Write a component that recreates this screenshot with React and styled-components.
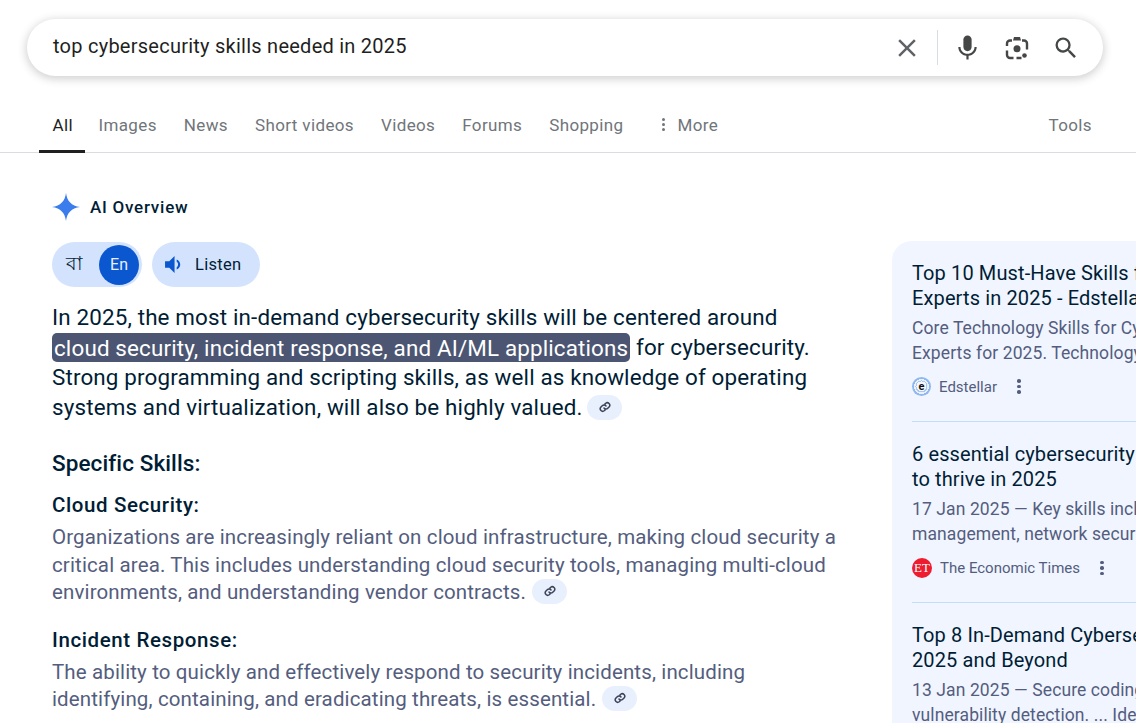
import styled, { createGlobalStyle } from "styled-components"

const GlobalStyle = createGlobalStyle`
  html, body {
    margin: 0;
    padding: 0;
    height: 100%;
    overflow: hidden;
    background: #fff;
    font-family: "Roboto", "Liberation Sans", sans-serif;
  }
  * { box-sizing: border-box; }
`

const tabs = ["All", "Images", "News", "Short videos", "Videos", "Forums", "Shopping"]

function LinkChip() {
  return (
    <Chip>
      <svg width="12" height="12" viewBox="0 0 24 24" fill="none" stroke="#3c4358" strokeWidth="3" strokeLinecap="round">
        <path d="M10 14a5 5 0 0 0 7.5.5l3-3a5 5 0 0 0-7-7l-1.7 1.7" />
        <path d="M14 10a5 5 0 0 0-7.5-.5l-3 3a5 5 0 0 0 7 7l1.7-1.7" />
      </svg>
    </Chip>
  )
}

function Dots() {
  return (
    <DotsWrap>
      <i /><i /><i />
    </DotsWrap>
  )
}

function App() {
  return (
    <Page>
      <GlobalStyle />
      <SearchBar>
        <SearchText>top cybersecurity skills needed in 2025</SearchText>
        <svg width="30" height="30" viewBox="0 0 24 24" fill="#5f6368">
          <path d="M19 6.41 17.59 5 12 10.59 6.41 5 5 6.41 10.59 12 5 17.59 6.41 19 12 13.41 17.59 19 19 17.59 13.41 12z" />
        </svg>
        <Divider />
        <IconGroup>
          <svg width="29" height="29" viewBox="0 0 24 24" fill="#444746">
            <path d="M12 15c1.9 0 3.4-1.5 3.4-3.4V5.4C15.4 3.5 13.9 2 12 2S8.600 3.500 8.600 5.400v6.200C8.600 13.500 10.100 15 12 15z" />
            <path d="M17.800 11.500c0 3.200-2.600 5.600-5.800 5.600s-5.800-2.400-5.800-5.600H4.400c0 3.800 3 6.900 6.700 7.400V22h1.800v-3.100c3.700-.5 6.700-3.600 6.700-7.400h-1.800z" />
          </svg>
          <svg width="24" height="24" viewBox="0 0 24 24" fill="none">
            <path d="M8 4.500l1-3.500h6l1 3.500z" fill="#444746" />
            <path d="M7 4.500H5a3 3 0 0 0-3 3V10M17 4.500h2a3 3 0 0 1 3 3v6M2 14.500V19a3 3 0 0 0 3 3h3.500M11.500 22h5" stroke="#444746" strokeWidth="2.400" />
            <circle cx="12" cy="12.800" r="3.500" fill="#444746" />
            <circle cx="19.500" cy="19.500" r="2.300" fill="#444746" />
          </svg>
          <svg width="28" height="28" viewBox="0 0 24 24" fill="#444746">
            <path d="M15.500 14h-.79l-.28-.27A6.470 6.470 0 0 0 16 9.500 6.500 6.500 0 1 0 9.500 16c1.610 0 3.090-.59 4.230-1.570l.27.28v.79l5 4.990L20.490 19l-4.990-5zm-6 0C7.010 14 5 11.990 5 9.500S7.010 5 9.500 5 14 7.010 14 9.500 11.990 14 9.500 14z" />
          </svg>
        </IconGroup>
      </SearchBar>

      <TabBar>
        {tabs.map((t, i) => (
          <Tab key={t} $active={i === 0}>{t}</Tab>
        ))}
        <Tab>
          <MoreDots><i /><i /><i /></MoreDots>
          More
        </Tab>
        <ToolsTab>Tools</ToolsTab>
      </TabBar>

      <Content>
        <MainColumn>
          <OverviewHead>
            <svg width="30" height="30" viewBox="0 0 30 30">
              <path d="M15 1c1 8 5.500 12.800 14 14-8.500 1.200-13 6-14 14-1-8-5.500-12.800-14-14C9.500 13.800 14 9 15 1z" fill="#3b7ded" />
            </svg>
            <OverviewTitle>AI Overview</OverviewTitle>
          </OverviewHead>

          <PillRow>
            <LangToggle>
              <LangOption>বা</LangOption>
              <LangActive>En</LangActive>
            </LangToggle>
            <ListenButton>
              <svg width="19" height="19" viewBox="2 3 18 18" fill="#0b57d0">
                <path d="M3 9v6h4l5 5V4L7 9H3z" />
                <path d="M14 7.200c2 .8 3.400 2.600 3.400 4.800s-1.400 4-3.400 4.800v-2.300c.9-.5 1.300-1.400 1.300-2.500s-.4-2-1.300-2.500z" />
              </svg>
              Listen
            </ListenButton>
          </PillRow>

          <Lead>
            In 2025, the most in-demand cybersecurity skills will be centered around<br />
            <Highlight>cloud security, incident response, and AI/ML applications</Highlight> for cybersecurity.<br />
            Strong programming and scripting skills, as well as knowledge of operating<br />
            systems and virtualization, will also be highly valued. <LinkChip />
          </Lead>

          <SectionTitle>Specific Skills:</SectionTitle>

          <SkillTitle>Cloud Security:</SkillTitle>
          <SkillText>
            Organizations are increasingly reliant on cloud infrastructure, making cloud security a<br />
            critical area. This includes understanding cloud security tools, managing multi-cloud<br />
            environments, and understanding vendor contracts. <LinkChip />
          </SkillText>

          <SkillTitle>Incident Response:</SkillTitle>
          <SkillText>
            The ability to quickly and effectively respond to security incidents, including<br />
            identifying, containing, and eradicating threats, is essential. <LinkChip />
          </SkillText>
        </MainColumn>

        <SidePanel>
          <Source>
            <SourceTitle>Top 10 Must-Have Skills for Cybersecurity<br />Experts in 2025 - Edstellar</SourceTitle>
            <SourceText>Core Technology Skills for Cybersecurity<br />Experts for 2025. Technology skills</SourceText>
            <SourceMeta>
              <EdIcon>e</EdIcon>
              <SourceName>Edstellar</SourceName>
              <Dots />
            </SourceMeta>
          </Source>
          <Source>
            <SourceTitle>6 essential cybersecurity skills you need<br />to thrive in 2025</SourceTitle>
            <SourceText>17 Jan 2025 — Key skills include risk<br />management, network security and</SourceText>
            <SourceMeta>
              <EtIcon>ET</EtIcon>
              <SourceName>The Economic Times</SourceName>
              <Dots />
            </SourceMeta>
          </Source>
          <Source>
            <SourceTitle>Top 8 In-Demand Cybersecurity Skills for<br />2025 and Beyond</SourceTitle>
            <SourceText>13 Jan 2025 — Secure coding and<br />vulnerability detection. ... Identity</SourceText>
          </Source>
        </SidePanel>
      </Content>
    </Page>
  )
}

const Page = styled.div`
  width: 1136px;
  height: 723px;
  overflow: hidden;
  padding-top: 19px;
  color: #001d35;
`

const SearchBar = styled.div`
  display: flex;
  align-items: center;
  width: 1076px;
  height: 57px;
  margin-left: 27px;
  padding: 0 23px 0 26px;
  background: #fff;
  border-radius: 29px;
  box-shadow: 0 2px 8px 1px rgba(64, 60, 67, 0.24);
`

const SearchText = styled.div`
  flex: 1;
  font-size: 20px;
  letter-spacing: 0.25px;
  color: #1f1f1f;
  padding-bottom: 4px;
`

const Divider = styled.div`
  width: 1px;
  height: 35px;
  margin: 0 15px 0 15px;
  background: #dadce0;
`

const IconGroup = styled.div`
  display: flex;
  align-items: center;
  gap: 23px;
`

const TabBar = styled.nav`
  display: flex;
  height: 57px;
  margin-top: 20px;
  padding: 0 44px 0 39px;
  border-bottom: 1px solid #dadce0;
`

const Tab = styled.div`
  display: flex;
  align-items: center;
  height: 57px;
  padding: 3px ${(p) => (p.$active ? "12px" : "13.5px")} 0 13.5px;
  font-size: 17px;
  letter-spacing: 0.37px;
  color: ${(p) => (p.$active ? "#1f1f1f" : "#70757a")};
  border-bottom: 3px solid ${(p) => (p.$active ? "#1f1f1f" : "transparent")};
`

const ToolsTab = styled(Tab)`
  margin-left: auto;
  padding: 3px 0 0;
`

const MoreDots = styled.span`
  display: inline-flex;
  flex-direction: column;
  gap: 2px;
  margin: 0 12px 0 12px;
  i {
    display: block;
    width: 3px;
    height: 3px;
    border-radius: 50%;
    background: #70757a;
  }
`

const Content = styled.div`
  display: flex;
  justify-content: space-between;
  padding-left: 52px;
`

const MainColumn = styled.div`
  width: 800px;
`

const OverviewHead = styled.div`
  display: flex;
  align-items: center;
  gap: 9px;
  margin: 39px 0 0 -1px;
  height: 30px;
`

const OverviewTitle = styled.div`
  font-size: 17px;
  font-weight: 500;
  letter-spacing: 0.75px;
  color: #001d35;
`

const PillRow = styled.div`
  display: flex;
  gap: 10px;
  margin-top: 20px;
`

const LangToggle = styled.div`
  display: flex;
  align-items: center;
  justify-content: space-between;
  width: 90px;
  height: 45px;
  padding: 0 3px 0 14px;
  border-radius: 23px;
  background: #d3e3fd;
`

const LangOption = styled.span`
  font-family: "Noto Sans", "DejaVu Sans", sans-serif;
  font-size: 19px;
  font-weight: 500;
  color: #001d35;
`

const LangActive = styled.span`
  display: flex;
  align-items: center;
  justify-content: center;
  width: 40px;
  height: 40px;
  border-radius: 50%;
  background: #0b57d0;
  color: #e8f0fe;
  font-size: 16px;
`

const ListenButton = styled.div`
  display: flex;
  align-items: center;
  gap: 12px;
  width: 108px;
  height: 45px;
  padding-left: 12px;
  border-radius: 23px;
  background: #d3e3fd;
  color: #001d35;
  font-size: 16.5px;
  letter-spacing: 0.3px;
`

const Lead = styled.div`
  margin-top: 15px;
  font-size: 22.4px;
  line-height: 30px;
  color: #001d35;
  letter-spacing: 0.15px;
  white-space: nowrap;
`

const Highlight = styled.span`
  background: #4c5672;
  color: #fff;
  border-radius: 5px;
  padding: 1.5px 2px;
`

const Chip = styled.span`
  display: inline-flex;
  align-items: center;
  justify-content: center;
  position: relative;
  top: -2px;
  width: 35px;
  height: 25px;
  margin-left: -1px;
  border-radius: 13px;
  background: #e8f0fe;
`

const SectionTitle = styled.div`
  margin-top: 27px;
  font-size: 22.5px;
  line-height: 28px;
  font-weight: 500;
  letter-spacing: 0.1px;
  color: #001d35;
`

const SkillTitle = styled.div`
  margin-top: 15px;
  font-size: 20.5px;
  line-height: 26px;
  font-weight: 500;
  letter-spacing: 0.6px;
  color: #001d35;
`

const SkillText = styled.div`
  margin-top: 6px;
  margin-bottom: 20px;
  font-size: 20.5px;
  line-height: 27.5px;
  letter-spacing: 0.13px;
  color: #545d7e;
  white-space: nowrap;
  ${Chip} {
    margin-left: 1px;
  }
`

const SidePanel = styled.div`
  width: 244px;
  height: 600px;
  margin-top: 88px;
  padding: 20px 0 0 20px;
  border-radius: 20px 0 0 0;
  background: #f0f5ff;
  white-space: nowrap;
  overflow: hidden;
`

const Source = styled.div`
  height: 181px;
  border-bottom: 1px solid #c5dcf5;
  & + & {
    padding-top: 20px;
  }
  &:last-child {
    border-bottom: none;
  }
  &:first-child {
    height: 161px;
  }
`

const SourceTitle = styled.div`
  font-size: 20px;
  line-height: 25px;
  letter-spacing: 0.12px;
  color: #001d35;
`

const SourceText = styled.div`
  margin-top: 5px;
  font-size: 17.5px;
  line-height: 25px;
  letter-spacing: 0.1px;
  color: #545d7e;
`

const SourceMeta = styled.div`
  display: flex;
  align-items: center;
  margin-top: 11px;
  gap: 8px;
`

const EdIcon = styled.span`
  display: flex;
  align-items: center;
  justify-content: center;
  width: 19px;
  height: 19px;
  border-radius: 50%;
  background: radial-gradient(circle, #f4f7fd 0 5px, #a9c7f0 5px 6px, #eaf1fd 6px 7.5px, #8fb8ee 7.5px);
  font-size: 11px;
  font-weight: 700;
  color: #111;
`

const EtIcon = styled.span`
  display: flex;
  align-items: center;
  justify-content: center;
  width: 20px;
  height: 20px;
  border-radius: 50%;
  background: #ed1c2e;
  color: #fff;
  font-family: "Liberation Serif", serif;
  font-size: 13px;
`

const SourceName = styled.span`
  font-size: 15px;
  color: #545d7e;
`

const DotsWrap = styled.span`
  display: inline-flex;
  flex-direction: column;
  gap: 2px;
  margin-left: 12px;
  i {
    display: block;
    width: 3.5px;
    height: 3.5px;
    border-radius: 50%;
    background: #545d7e;
  }
`

export default App
